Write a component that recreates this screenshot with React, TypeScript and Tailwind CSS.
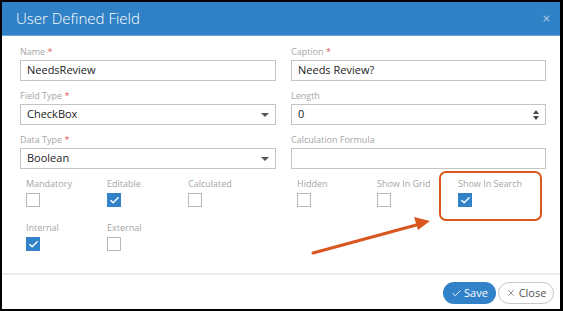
import { Check, X } from 'lucide-react'

const font = { fontFamily: '"Open Sans", "Liberation Sans", sans-serif' }

function Label({ text, required }: { text: string; required?: boolean }) {
  return (
    <div className="h-[12px] text-[9px] leading-[12px] text-[#a6a6a6]">
      {text}
      {required && <span className="text-[#e05a5a]"> *</span>}
    </div>
  )
}

function Field({
  label,
  required,
  value,
  kind,
}: {
  label: string
  required?: boolean
  value?: string
  kind?: 'select' | 'spin'
}) {
  return (
    <div className="flex flex-col gap-[2px] mb-[9px]">
      <Label text={label} required={required} />
      <div className="relative h-[21px] border border-[#c4c4c4] bg-white flex items-center px-[6px] text-[11px] text-[#222]">
        {value}
        {kind === 'select' && (
          <span className="absolute right-[6px] top-[8px] w-0 h-0 border-l-[4px] border-r-[4px] border-t-[4px] border-l-transparent border-r-transparent border-t-[#555]" />
        )}
        {kind === 'spin' && (
          <span className="absolute right-[6px] top-[5px] flex flex-col gap-[2px]">
            <span className="w-0 h-0 border-l-[3.5px] border-r-[3.5px] border-b-[4px] border-l-transparent border-r-transparent border-b-[#444]" />
            <span className="w-0 h-0 border-l-[3.5px] border-r-[3.5px] border-t-[4px] border-l-transparent border-r-transparent border-t-[#444]" />
          </span>
        )}
      </div>
    </div>
  )
}

function Box({ label, checked }: { label: string; checked?: boolean }) {
  return (
    <div className="flex flex-col gap-[3px]">
      <Label text={label} />
      {checked ? (
        <div className="w-[14px] h-[14px] bg-[#3182c8] flex items-center justify-center">
          <Check size={11} strokeWidth={3} color="#fff" />
        </div>
      ) : (
        <div className="w-[14px] h-[14px] border border-[#b8b8b8] bg-white" />
      )}
    </div>
  )
}

export default function App() {
  return (
    <div className="w-[563px] h-[311px] bg-black pt-[2px] pl-[2px] pr-[3px] pb-[2px]" style={font}>
      <div className="relative w-full h-full bg-white flex flex-col">
        {/* Header */}
        <div className="h-[34px] bg-[#3181c6] border-b border-[#6aa6dc] flex items-center justify-between pl-[14px] pr-[9px]">
          <span className="text-white text-[15px] font-light">User Defined Field</span>
          <X size={9} strokeWidth={4} color="#8fb9e0" />
        </div>

        {/* Body */}
        <div className="flex-1 pt-[10px] pl-[18px] pr-[14px]">
          <div className="grid grid-cols-[256px_255px] gap-x-[15px]">
            <div>
              <Field label="Name" required value="NeedsReview" />
              <Field label="Field Type" required value="CheckBox" kind="select" />
              <Field label="Data Type" required value="Boolean" kind="select" />
            </div>
            <div>
              <Field label="Caption" required value="Needs Review?" />
              <Field label="Length" value="0" kind="spin" />
              <Field label="Calculation Formula" />
            </div>
          </div>

          <div className="grid grid-cols-[256px_255px] gap-x-[15px]">
            <div className="pl-[6px] grid grid-cols-[81px_81px_81px] gap-y-[15px]">
              <Box label="Mandatory" />
              <Box label="Editable" checked />
              <Box label="Calculated" />
              <Box label="Internal" checked />
              <Box label="External" />
            </div>
            <div className="pl-[6px] grid grid-cols-[80px_81px_81px] gap-y-[15px]">
              <Box label="Hidden" />
              <Box label="Show In Grid" />
              <Box label="Show In Search" checked />
            </div>
          </div>
        </div>

        {/* Footer */}
        <div className="h-[36px] border-t-2 border-[#ececec] flex items-start justify-end gap-[2px] pt-[7px] pr-[6px]">
          <button className="h-[22px] w-[53px] rounded-full bg-[#3182c8] text-white text-[11px] flex items-center justify-center gap-[2px]">
            <Check size={11} strokeWidth={2} />
            Save
          </button>
          <button className="h-[22px] w-[56px] rounded-full border border-[#c8c8c8] bg-white text-[#555] text-[11px] flex items-center justify-center gap-[3px]">
            <X size={10} strokeWidth={1.5} />
            Close
          </button>
        </div>

        {/* Annotation */}
        <div className="absolute left-[437px] top-[169px] w-[103px] h-[50px] rounded-[7px] border-2 border-[#d9561e]" />
        <svg className="absolute left-0 top-0" width="558" height="307" viewBox="0 0 558 307">
          <line x1="311" y1="251" x2="418" y2="222" stroke="#d9561e" strokeWidth="3" strokeLinecap="round" />
          <polygon points="428,219 412,215 416,228" fill="#d9561e" />
        </svg>
      </div>
    </div>
  )
}
